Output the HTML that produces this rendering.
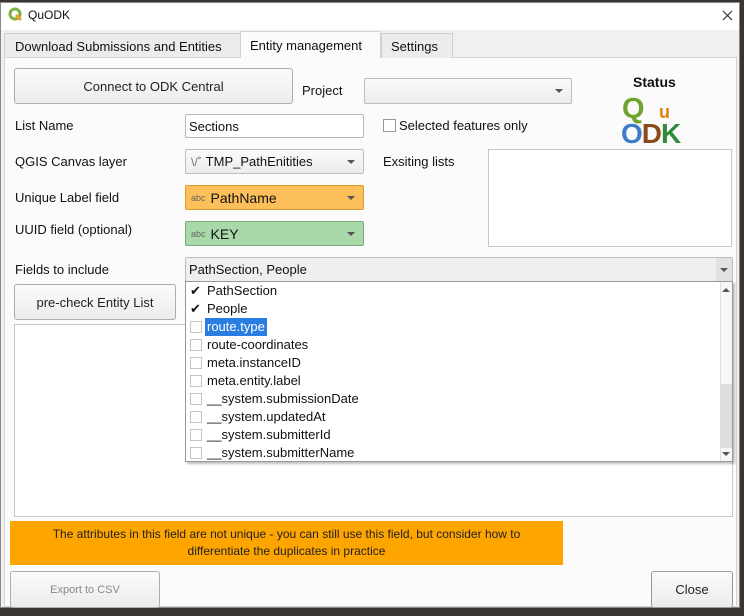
<!DOCTYPE html>
<html><head><meta charset="utf-8"><style>
*{box-sizing:border-box;margin:0;padding:0}
body{width:744px;height:616px;background:#3a3530;position:relative;overflow:hidden;font-family:"Liberation Sans",sans-serif;font-size:13px;color:#111}
.a{position:absolute}
.win{left:0;top:2px;width:740px;height:606px;background:#f0f0f0;border:1px solid #888}
.btn{position:absolute;background:linear-gradient(#fbfbfb,#ececec);border:1px solid #adadad;border-radius:3px;display:flex;align-items:center;justify-content:center;font-size:13px;color:#222}
.lbl{position:absolute;font-size:13px;line-height:16px}
.inp{position:absolute;background:#fff;border:1px solid #b8b8b8;border-radius:2px;padding-left:3px;display:flex;align-items:center}
.cb{position:absolute;background:linear-gradient(#fafafa,#ececec);border:1px solid #bdbdbd;border-radius:2px;display:flex;align-items:center;padding-left:5px}
.arr{position:absolute;right:8px;top:50%;margin-top:-2px;width:0;height:0;border-left:4px solid transparent;border-right:4px solid transparent;border-top:4px solid #555}
.chk{position:absolute;width:12px;height:12px;border:1px solid #c4c4c4;background:#fff;left:4px}
.item{position:absolute;left:0;height:18px;width:530px;font-size:13px;line-height:18px}
.item span{position:absolute;left:19px;padding:0 2px}
</style></head><body>
<div class="a win"></div>
<div class="a" style="left:1px;top:3px;width:738px;height:27px;background:#fff"></div>
<svg class="a" style="left:8px;top:7px" width="15" height="15" viewBox="0 0 15 15"><circle cx="7" cy="7" r="5" fill="none" stroke="#7cb342" stroke-width="3"/><path d="M8 8 L13 13" stroke="#f1a02a" stroke-width="3"/></svg>
<div class="lbl" style="left:28px;top:7px;font-size:12px">QuODK</div>
<svg class="a" style="left:722px;top:10px" width="11" height="11" viewBox="0 0 11 11"><path d="M1 1L10 10M10 1L1 10" stroke="#333" stroke-width="1.2"/></svg>
<!-- tabs -->
<div class="a" style="left:4px;top:33px;width:237px;height:25px;background:#ececec;border:1px solid #d0d0d0;border-bottom:none"></div>
<div class="lbl" style="left:15px;top:39px">Download Submissions and Entities</div>
<div class="a" style="left:4px;top:57px;width:733px;height:550px;background:#fbfbfb;border:1px solid #d4d4d4"></div>
<div class="a" style="left:240px;top:31px;width:141px;height:27px;background:#fbfbfb;border:1px solid #d4d4d4;border-bottom:none"></div>
<div class="lbl" style="left:250px;top:38px">Entity management</div>
<div class="a" style="left:381px;top:33px;width:72px;height:25px;background:#ececec;border:1px solid #d0d0d0;border-bottom:none"></div>
<div class="lbl" style="left:391px;top:39px">Settings</div>

<div class="btn" style="left:14px;top:68px;width:279px;height:36px">Connect to ODK Central</div>
<div class="lbl" style="left:302px;top:83px">Project</div>
<div class="cb" style="left:364px;top:78px;width:208px;height:26px"><div class="arr"></div></div>
<div class="lbl" style="left:633px;top:74px;font-weight:bold;font-size:14px">Status</div>
<div class="a" style="left:622px;top:94px;font-weight:bold;font-size:29px;color:#6fa52e;line-height:30px">Q</div>
<div class="a" style="left:659px;top:102px;font-weight:bold;font-size:18px;color:#e67e14;line-height:20px">u</div>
<div class="a" style="left:621px;top:119px;font-weight:bold;font-size:28px;line-height:30px;letter-spacing:-1px"><span style="color:#3d7cc9">O</span><span style="color:#8a4b1c">D</span><span style="color:#2e8b3a">K</span></div>

<div class="lbl" style="left:15px;top:118px">List Name</div>
<div class="inp" style="left:185px;top:114px;width:179px;height:24px">Sections</div>
<div class="a" style="left:383px;top:119px;width:13px;height:13px;border:1px solid #999;background:#fff"></div>
<div class="lbl" style="left:399px;top:118px">Selected features only</div>

<div class="lbl" style="left:15px;top:154px">QGIS Canvas layer</div>
<div class="cb" style="left:185px;top:149px;width:179px;height:25px"><span style="color:#777;font-size:12px;margin-right:4px">\/˚</span>TMP_PathEnitities<div class="arr"></div></div>
<div class="lbl" style="left:383px;top:154px">Exsiting lists</div>
<div class="a" style="left:488px;top:149px;width:244px;height:98px;background:#fff;border:1px solid #c8c8c8"></div>

<div class="lbl" style="left:15px;top:190px">Unique Label field</div>
<div class="cb" style="left:185px;top:185px;width:179px;height:25px;background:#fcbf5a;border-color:#d99a30;font-size:14px"><span style="font-size:9px;color:#666;margin-right:5px">abc</span>PathName<div class="arr"></div></div>
<div class="lbl" style="left:15px;top:222px">UUID field (optional)</div>
<div class="cb" style="left:185px;top:221px;width:179px;height:25px;background:#a9d8a9;border-color:#7aa97a;font-size:14px"><span style="font-size:9px;color:#666;margin-right:5px">abc</span>KEY<div class="arr"></div></div>

<div class="lbl" style="left:15px;top:262px">Fields to include</div>
<div class="cb" style="left:185px;top:257px;width:548px;height:25px;background:#efefef;padding-left:3px">PathSection, People<div class="a" style="right:0;top:0;width:16px;height:23px;background:#e2e2e2"></div><div class="arr" style="right:4px"></div></div>
<div class="btn" style="left:14px;top:284px;width:162px;height:36px">pre-check Entity List</div>
<div class="a" style="left:14px;top:324px;width:719px;height:193px;background:#fff;border:1px solid #c8c8c8"></div>

<div class="a" style="left:185px;top:281px;width:548px;height:181px;background:#fff;border:1px solid #999;box-shadow:2px 2px 2px rgba(0,0,0,.25)">
<div class="item" style="top:0"><div class="chk" style="border:none;background:none;font-size:13px;line-height:12px;top:3px">✔</div><span>PathSection</span></div>
<div class="item" style="top:18px"><div class="chk" style="border:none;background:none;font-size:13px;line-height:12px;top:3px">✔</div><span>People</span></div>
<div class="item" style="top:36px"><div class="chk" style="top:3px"></div><span style="background:#2a7de1;color:#fff">route.type</span></div>
<div class="item" style="top:54px"><div class="chk" style="top:3px"></div><span>route-coordinates</span></div>
<div class="item" style="top:72px"><div class="chk" style="top:3px"></div><span>meta.instanceID</span></div>
<div class="item" style="top:90px"><div class="chk" style="top:3px"></div><span>meta.entity.label</span></div>
<div class="item" style="top:108px"><div class="chk" style="top:3px"></div><span>__system.submissionDate</span></div>
<div class="item" style="top:126px"><div class="chk" style="top:3px"></div><span>__system.updatedAt</span></div>
<div class="item" style="top:144px"><div class="chk" style="top:3px"></div><span>__system.submitterId</span></div>
<div class="item" style="top:162px"><div class="chk" style="top:3px"></div><span>__system.submitterName</span></div>
<div class="a" style="right:0;top:0;width:12px;height:179px;background:#f7f7f7;border-left:1px solid #e0e0e0"></div>
<div class="a" style="right:0;top:102px;width:12px;height:64px;background:#dedede"></div>
<div class="a" style="right:2px;top:6px;border-left:4px solid transparent;border-right:4px solid transparent;border-bottom:4px solid #555"></div>
<div class="a" style="right:2px;top:170px;border-left:4px solid transparent;border-right:4px solid transparent;border-top:4px solid #555"></div>
</div>

<div class="a" style="left:10px;top:521px;width:553px;height:44px;background:#ffa500;font-size:12px;color:#222;text-align:center;line-height:17px;padding-top:5px">The attributes in this field are not unique - you can still use this field, but consider how to<br>differentiate the duplicates in practice</div>
<div class="btn" style="left:10px;top:571px;width:150px;height:37px;color:#888;font-size:11px">Export to CSV</div>
<div class="btn" style="left:651px;top:571px;width:82px;height:37px;border-color:#999">Close</div>
</body></html>
